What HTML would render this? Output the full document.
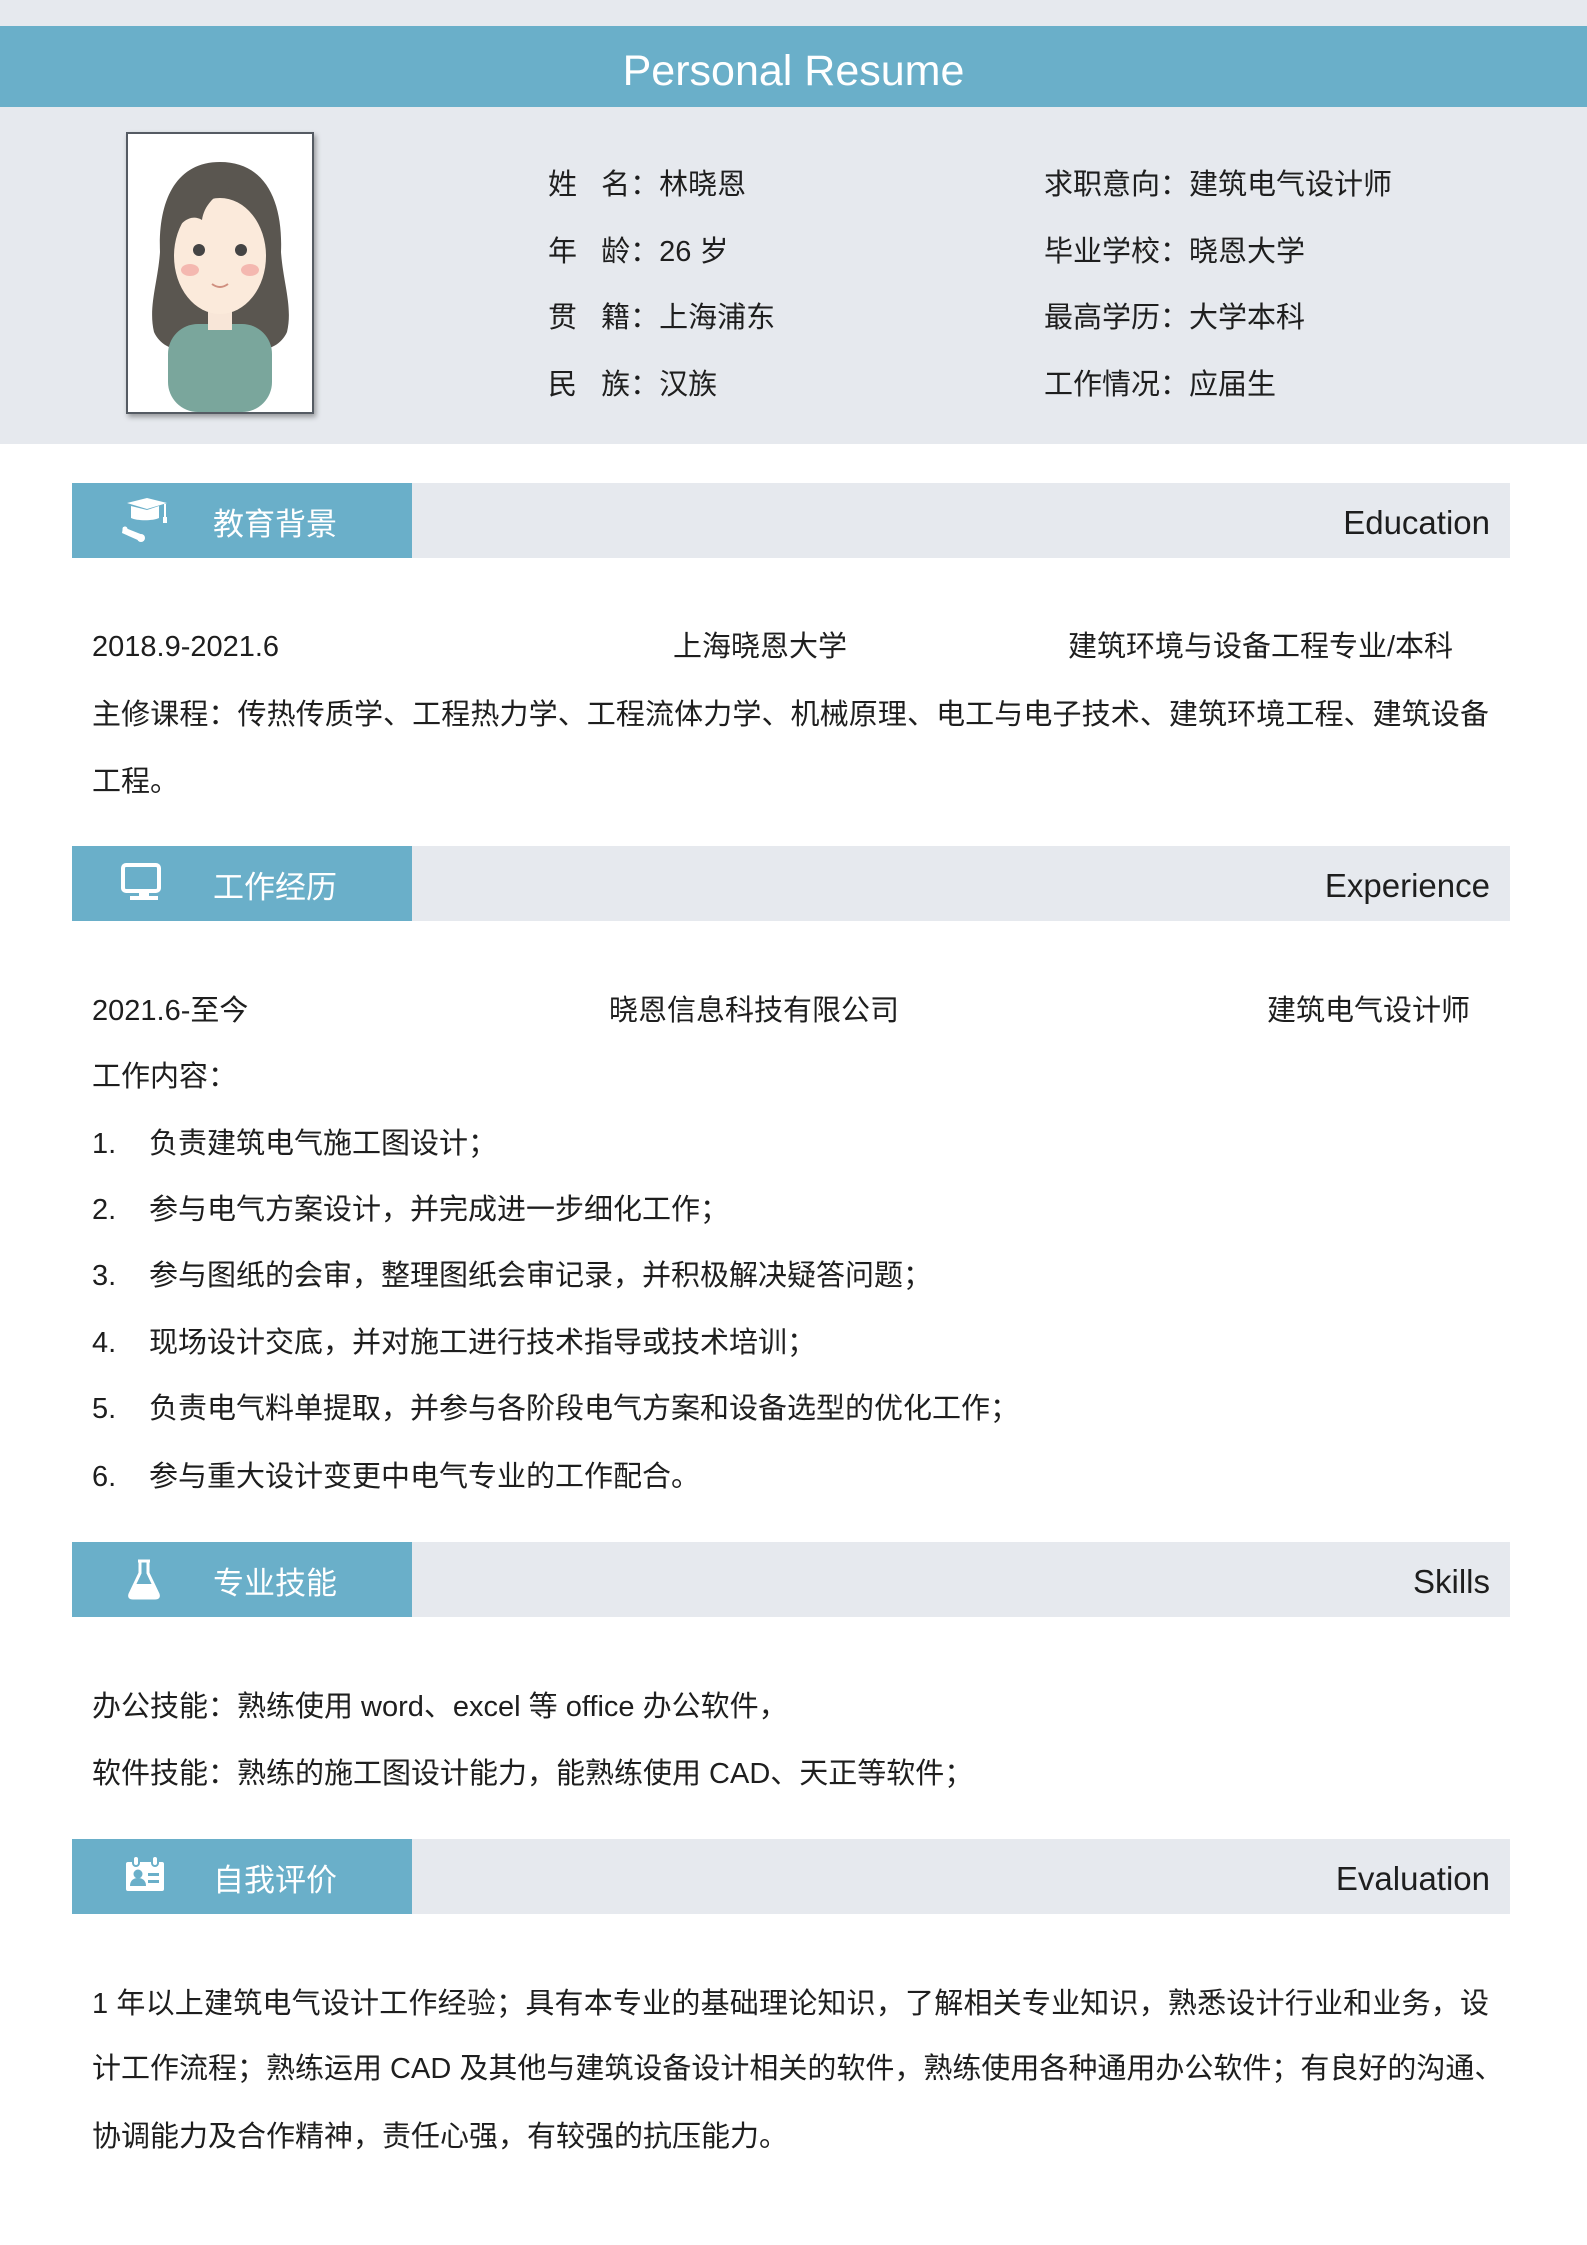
<!DOCTYPE html>
<html><head><meta charset="utf-8">
<style>
*{margin:0;padding:0;box-sizing:border-box}
body{width:1587px;height:2245px;background:#fff;position:relative;overflow:hidden;font-family:"Liberation Sans","Noto Sans CJK SC",sans-serif;color:#1e1e1e}
.a{position:absolute;white-space:nowrap;font-size:29px;line-height:40px;margin-top:3px}
.band{position:absolute;left:0;width:1587px;background:#e6e9ee}
.sec{position:absolute;left:72px;width:1438px;height:75px;background:#e6e9ee}
.sec .b{position:absolute;left:0;top:0;width:340px;height:75px;background:#6aafc9}
.sec .t{position:absolute;left:141px;top:22px;color:#fff;font-size:31px;line-height:40px}
.sec .e{position:absolute;right:20px;top:20px;font-size:33px;line-height:40px;color:#1e1e1e}
.sec svg{position:absolute;left:47px;top:14px}
</style></head><body>
<div class="band" style="top:0;height:444px"></div>
<div style="position:absolute;left:0;top:26px;width:1587px;height:81px;background:#6aafc9"></div>
<div class="a" style="left:0;width:1587px;text-align:center;top:44px;font-size:43px;line-height:48px;color:#fff">Personal Resume</div>

<div style="position:absolute;left:126px;top:132px;width:188px;height:282px;background:#fff;border:2px solid #555b63;box-shadow:2px 3px 5px rgba(0,0,0,.35)">
<svg width="184" height="278" viewBox="0 0 184 278">
<path d="M92 28c-45 0-62 40-60 90-2 30-12 55-6 80 8 18 30 22 45 14l42 0c16 8 38 4 46-14 6-25-4-50-6-80 2-50-15-90-61-90z" fill="#5a5650"/>
<rect x="40" y="190" width="104" height="88" rx="30" fill="#7aa69c"/>
<rect x="80" y="170" width="24" height="26" fill="#f8e6d8"/>
<ellipse cx="92" cy="122" rx="46" ry="58" fill="#fbeadb"/>
<path d="M46 100c10-40 40-50 60-48-20 8-30 20-32 34-10-6-20 0-28 14z" fill="#5a5650"/>
<circle cx="71" cy="116" r="6" fill="#444"/><circle cx="113" cy="116" r="6" fill="#444"/>
<ellipse cx="62" cy="136" rx="9" ry="6" fill="#f4b8b0"/><ellipse cx="122" cy="136" rx="9" ry="6" fill="#f4b8b0"/>
<path d="M84 150q8 6 16 0" stroke="#d09080" stroke-width="2" fill="none"/>
</svg></div>

<div class="a" style="left:548px;top:162px">姓&nbsp;&nbsp;&nbsp;名：林晓恩</div>
<div class="a" style="left:548px;top:229px">年&nbsp;&nbsp;&nbsp;龄：26 岁</div>
<div class="a" style="left:548px;top:295px">贯&nbsp;&nbsp;&nbsp;籍：上海浦东</div>
<div class="a" style="left:548px;top:362px">民&nbsp;&nbsp;&nbsp;族：汉族</div>
<div class="a" style="left:1044px;top:162px">求职意向：建筑电气设计师</div>
<div class="a" style="left:1044px;top:229px">毕业学校：晓恩大学</div>
<div class="a" style="left:1044px;top:295px">最高学历：大学本科</div>
<div class="a" style="left:1044px;top:362px">工作情况：应届生</div>

<div class="sec" style="top:483px"><div class="b"></div>
<svg width="50" height="46" viewBox="0 0 50 46"><path d="M8 6l20-5 20 5-20 6z" fill="#fff"/><path d="M12 9v12c6 3 22 3 28 0V9l-12 4z" fill="#fff"/><path d="M46 7v14" stroke="#fff" stroke-width="2"/><rect x="44" y="20" width="4" height="6" fill="#fff"/><path d="M4 30l20 8-3 6-18-8z" fill="#fff"/><circle cx="22" cy="41" r="4" fill="#fff"/><circle cx="6" cy="32" r="2.5" fill="#fff"/></svg>
<div class="t">教育背景</div><div class="e">Education</div></div>
<div class="a" style="left:92px;top:624px">2018.9-2021.6</div>
<div class="a" style="left:673px;top:624px">上海晓恩大学</div>
<div class="a" style="left:1068px;top:624px">建筑环境与设备工程专业/本科</div>
<div class="a" style="left:92px;top:692px;width:1397px;text-align:justify;text-align-last:justify">主修课程：传热传质学、工程热力学、工程流体力学、机械原理、电工与电子技术、建筑环境工程、建筑设备</div>
<div class="a" style="left:92px;top:759px">工程。</div>

<div class="sec" style="top:846px"><div class="b"></div>
<svg width="50" height="46" viewBox="0 0 50 46"><rect x="26" y="5" width="36" height="26" rx="3" fill="none" stroke="#fff" stroke-width="4" transform="translate(-22 0)"/><rect x="20" y="31" width="10" height="5" fill="#fff"/><rect x="11" y="36" width="28" height="4" fill="#fff"/></svg>
<div class="t">工作经历</div><div class="e">Experience</div></div>
<div class="a" style="left:92px;top:988px">2021.6-至今</div>
<div class="a" style="left:609px;top:988px">晓恩信息科技有限公司</div>
<div class="a" style="left:1267px;top:988px">建筑电气设计师</div>
<div class="a" style="left:92px;top:1054px">工作内容：</div>
<div class="a" style="left:92px;top:1121px">1.</div><div class="a" style="left:149px;top:1121px">负责建筑电气施工图设计；</div>
<div class="a" style="left:92px;top:1187px">2.</div><div class="a" style="left:149px;top:1187px">参与电气方案设计，并完成进一步细化工作；</div>
<div class="a" style="left:92px;top:1253px">3.</div><div class="a" style="left:149px;top:1253px">参与图纸的会审，整理图纸会审记录，并积极解决疑答问题；</div>
<div class="a" style="left:92px;top:1320px">4.</div><div class="a" style="left:149px;top:1320px">现场设计交底，并对施工进行技术指导或技术培训；</div>
<div class="a" style="left:92px;top:1386px">5.</div><div class="a" style="left:149px;top:1386px">负责电气料单提取，并参与各阶段电气方案和设备选型的优化工作；</div>
<div class="a" style="left:92px;top:1454px">6.</div><div class="a" style="left:149px;top:1454px">参与重大设计变更中电气专业的工作配合。</div>

<div class="sec" style="top:1542px"><div class="b"></div>
<svg width="50" height="46" viewBox="0 0 50 46"><path d="M19 5h12M21 5v12L11 38c-1 3 0 4 3 4h22c3 0 4-1 3-4L29 17V5" fill="none" stroke="#fff" stroke-width="3"/><path d="M15 28h20l5 11c0 3-1 3-3 3H13c-2 0-3 0-3-3z" fill="#fff"/></svg>
<div class="t">专业技能</div><div class="e">Skills</div></div>
<div class="a" style="left:92px;top:1684px">办公技能：熟练使用 word、excel 等 office 办公软件，</div>
<div class="a" style="left:92px;top:1751px">软件技能：熟练的施工图设计能力，能熟练使用 CAD、天正等软件；</div>

<div class="sec" style="top:1839px"><div class="b"></div>
<svg width="50" height="46" viewBox="0 0 50 46"><rect x="7" y="9" width="38" height="29" rx="2" fill="#fff"/><rect x="14" y="3" width="6" height="10" rx="3" fill="#fff" stroke="#6aafc9" stroke-width="2"/><rect x="33" y="3" width="6" height="10" rx="3" fill="#fff" stroke="#6aafc9" stroke-width="2"/><circle cx="19" cy="21" r="4.5" fill="#6aafc9"/><path d="M11 33c0-6 4-8 8-8s8 2 8 8z" fill="#6aafc9"/><rect x="29" y="20" width="11" height="3" fill="#6aafc9"/><rect x="29" y="27" width="11" height="3" fill="#6aafc9"/></svg>
<div class="t">自我评价</div><div class="e">Evaluation</div></div>
<div class="a" style="left:92px;top:1981px;width:1397px;text-align:justify;text-align-last:justify">1 年以上建筑电气设计工作经验；具有本专业的基础理论知识，了解相关专业知识，熟悉设计行业和业务，设</div>
<div class="a" style="left:92px;top:2046px;width:1397px;text-align:justify;text-align-last:justify">计工作流程；熟练运用 CAD 及其他与建筑设备设计相关的软件，熟练使用各种通用办公软件；有良好的沟通、</div>
<div class="a" style="left:92px;top:2114px">协调能力及合作精神，责任心强，有较强的抗压能力。</div>
</body></html>
